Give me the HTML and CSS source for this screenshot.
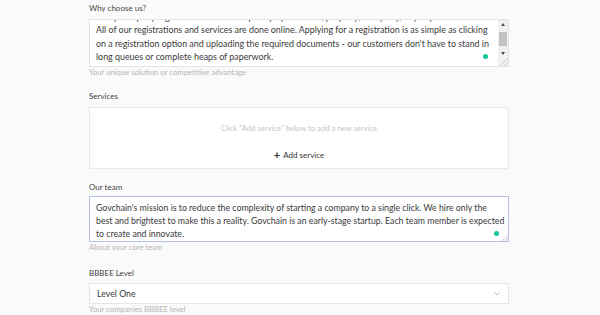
FILE: index.html
```html
<!DOCTYPE html>
<html lang="en">
<head>
  <meta charset="UTF-8">
  <title>Company profile</title>
  <link rel="stylesheet" href="styles.css">
</head>
<body>

  <div class="form">

    <div class="field first">
      <label>Why choose us?</label>
      <div class="textarea">
        <div class="text">
          <p class="scrolled">Every company registration is handled quickly by our team, properly, every day, anyway.</p>
          <p>All of our registrations and services are done online. Applying for a registration is as simple as clicking<br>
          on a registration option and uploading the required documents - our customers don't have to stand in<br>
          long queues or complete heaps of paperwork.</p>
          <span class="dot"></span>
        </div>
        <div class="scrollbar">
          <span class="arrow up"></span>
          <span class="track"><span class="thumb"></span></span>
          <span class="arrow down"></span>
          <span class="corner"></span>
        </div>
      </div>
      <div class="hint">Your unique solution or competitive advantage</div>
    </div>

    <div class="field services">
      <label>Services</label>
      <div class="box">
        <div class="empty">Click "Add service" below to add a new service</div>
        <a href="#" class="add"><span class="plus">+</span> Add service</a>
      </div>
    </div>

    <div class="field team">
      <label>Our team</label>
      <div class="textarea focus">
        <div class="text">
          <p>Govchain's mission is to reduce the complexity of starting a company to a single click. We hire only the<br>
          best and brightest to make this a reality. Govchain is an early-stage startup. Each team member is expected<br>
          to create and innovate.</p>
          <span class="dot"></span>
          <span class="grip"></span>
        </div>
      </div>
      <div class="hint">About your core team</div>
    </div>

    <div class="field level">
      <label>BBBEE Level</label>
      <div class="select">
        <span>Level One</span>
        <svg width="8" height="5" viewBox="0 0 8 5"><path d="M1 1l3 3 3-3" fill="none" stroke="#c4c4c4" stroke-width="1"/></svg>
      </div>
      <div class="hint">Your companies BBBEE level</div>
    </div>

  </div>

</body>
</html>
```

FILE: styles.css
```css
* {
  margin: 0;
  padding: 0;
  box-sizing: border-box;
}

body {
  font-family: 'Lato', sans-serif;
  background-color: #fafafa;
  color: #333;
}

.form {
  width: 420px;
  padding-top: 2px;
  margin-left: 89px;
}

.field {
  margin-bottom: 13px;
}

.field.services {
  margin-bottom: 12px;
}

.field.team {
  margin-bottom: 15px;
}

label {
  display: block;
  font-size: 8px;
  line-height: 12px;
  color: #444;
  margin-bottom: 5px;
}

.team label {
  margin-bottom: 3px;
}

.level label {
  margin-bottom: 4px;
}

.hint {
  font-size: 7.7px;
  line-height: 10px;
  color: #b5b5b5;
}

.textarea {
  display: flex;
  background-color: #fff;
  border: 1px solid #e4e4e4;
  height: 48px;
}

.textarea.focus {
  height: 46px;
  border-color: #b4c0e6;
}

.text {
  flex: 1;
  min-width: 0;
  position: relative;
  overflow: hidden;
  padding: 0 6px;
  font-size: 8.9px;
  line-height: 13.4px;
  color: #3a3a3a;
  white-space: nowrap;
}

.text .scrolled {
  margin-top: -10px;
}

.focus .text {
  padding: 4px 2px 0 6px;
  font-size: 8.75px;
  line-height: 13px;
}

.dot {
  position: absolute;
  right: 10px;
  bottom: 7px;
  width: 5px;
  height: 5px;
  border-radius: 50%;
  background-color: #15c39a;
}

.focus .dot {
  right: 9px;
  bottom: 5px;
}

.grip {
  position: absolute;
  right: 0;
  bottom: 0;
  width: 6px;
  height: 6px;
  background: linear-gradient(135deg, transparent 45%, #b9b9b9 46%, transparent 60%, transparent 72%, #b9b9b9 73%, transparent 85%);
}

.scrollbar {
  width: 10px;
  display: flex;
  flex-direction: column;
  background-color: #f1f1f1;
}

.arrow {
  height: 10px;
  display: flex;
  align-items: center;
  justify-content: center;
}

.arrow::before {
  content: "";
  border-left: 2.5px solid transparent;
  border-right: 2.5px solid transparent;
}

.arrow.up::before {
  border-bottom: 3px solid #505050;
}

.arrow.down::before {
  border-top: 3px solid #505050;
}

.track {
  flex: 1;
  display: flex;
  flex-direction: column;
  padding: 3px 1px;
}

.thumb {
  height: 14px;
  background-color: #c1c1c1;
}

.corner {
  height: 10px;
  background: linear-gradient(135deg, #f1f1f1 55%, #bbb 56%, #f1f1f1 62%, #f1f1f1 75%, #bbb 76%, #f1f1f1 82%);
  background-color: #f1f1f1;
}

.box {
  height: 62px;
  background-color: #fff;
  border: 1px solid #e9e9e9;
  display: flex;
  flex-direction: column;
  align-items: center;
  padding-top: 15px;
}

.empty {
  font-size: 7.7px;
  line-height: 10px;
  color: #c6c6c6;
}

.add {
  margin-top: 17px;
  font-size: 8px;
  line-height: 10px;
  color: #333;
  text-decoration: none;
  display: flex;
  align-items: center;
  gap: 3px;
}

.plus {
  font-size: 11px;
  font-weight: 700;
}

.select {
  height: 21px;
  background-color: #fff;
  border: 1px solid #e6e6e6;
  display: flex;
  align-items: center;
  justify-content: space-between;
  padding: 0 7px;
  font-size: 8.8px;
  color: #3a3a3a;
}
```
